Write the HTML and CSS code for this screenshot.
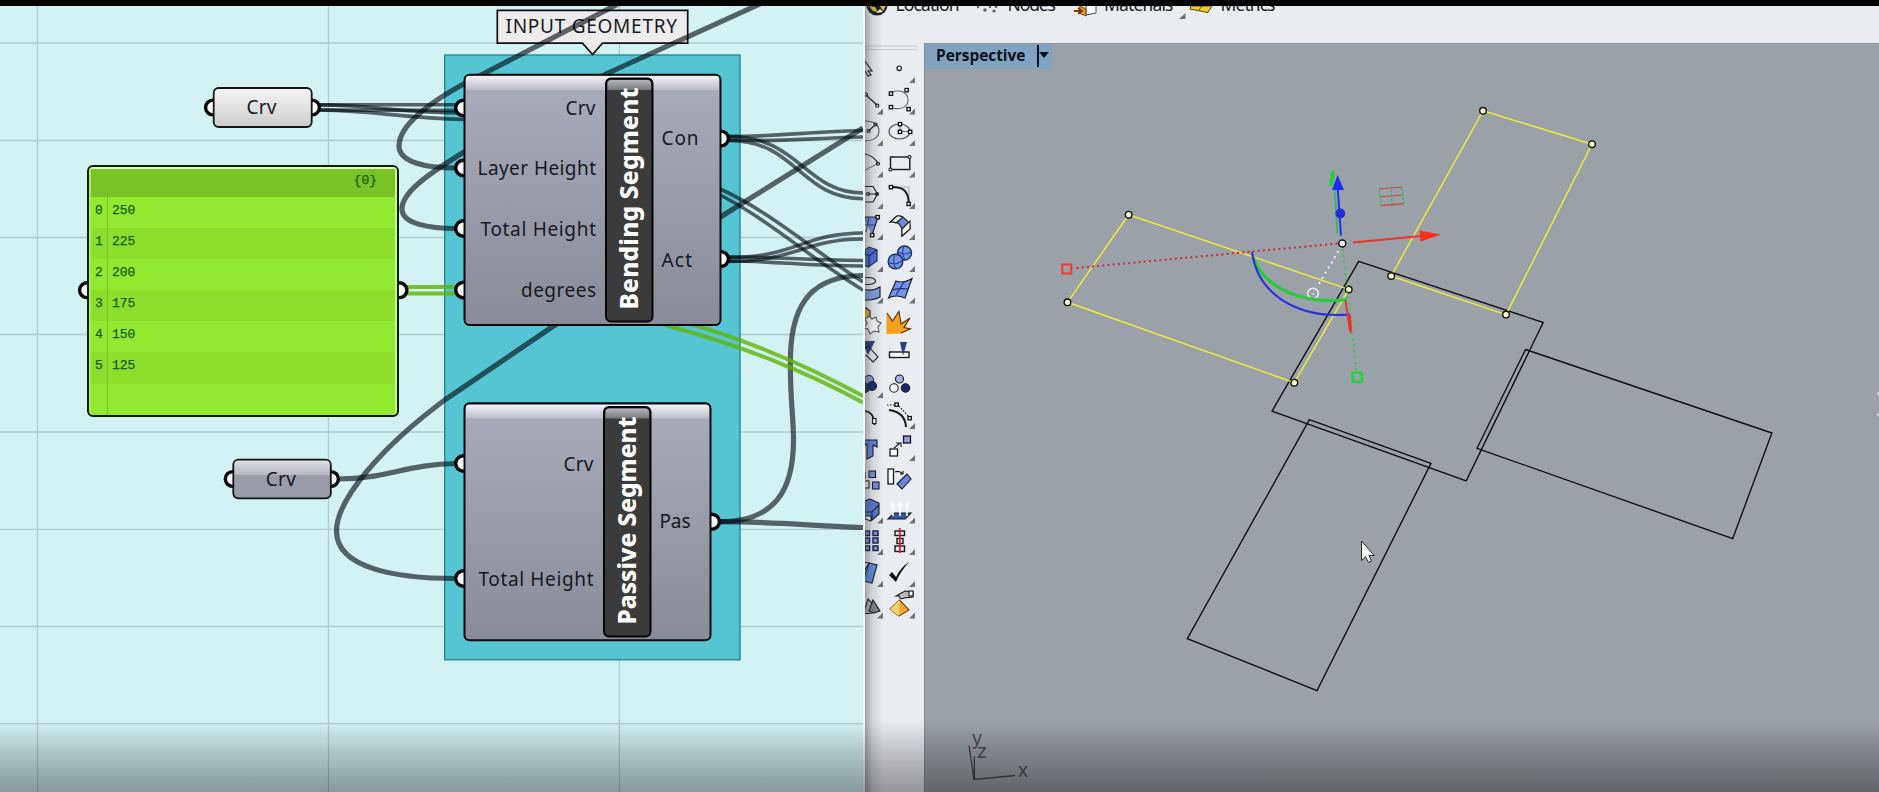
FILE: index.html
```html
<!DOCTYPE html>
<html lang="en">
<head>
<meta charset="utf-8">
<title>Input Geometry</title>
<link rel="stylesheet" href="styles.css">
</head>
<body>
<div class="topline"></div>
<main class="workspace">
  <section class="canvas">
    <svg class="graph" viewBox="0 6 863 786" width="863" height="786">
      <defs>
        <linearGradient id="body" x1="0" y1="0" x2="0" y2="1"><stop offset="0" stop-color="#a9adbb"/><stop offset="1" stop-color="#888c99"/></linearGradient>
        <linearGradient id="gloss" x1="0" y1="0" x2="0" y2="1"><stop offset="0" stop-color="#f2f2f6"/><stop offset="1" stop-color="#b9bcc8"/></linearGradient>
        <linearGradient id="param" x1="0" y1="0" x2="0" y2="1"><stop offset="0" stop-color="#e3e3e7"/><stop offset=".4" stop-color="#b4b6c0"/><stop offset=".41" stop-color="#9a9da8"/><stop offset="1" stop-color="#9a9ca8"/></linearGradient>
        <linearGradient id="light" x1="0" y1="0" x2="0" y2="1"><stop offset="0" stop-color="#f4f4f4"/><stop offset=".4" stop-color="#e6e6e6"/><stop offset="1" stop-color="#cccccc"/></linearGradient>
        <linearGradient id="strip" x1="0" y1="0" x2="0" y2="1"><stop offset="0" stop-color="#b5b6ba"/><stop offset="1" stop-color="#77787b"/></linearGradient>
      </defs>
      <path class="grid" d="M37.5 0V792M328.5 0V792M619.5 0V792M0 43H863M0 140.5H863M0 237.5H863M0 334.5H863M0 432H863M0 529.3H863M0 626.5H863M0 723.7H863"/>
      <rect class="group" x="444.7" y="55" width="295.3" height="604.8"/>
      <path class="balloon" d="M497.3 10.3H687.7V43.2H602.5L592.5 54.5L582.5 43.2H497.3Z"/>
      <text class="label" x="505.5" y="32.7" textLength="171.5">INPUT GEOMETRY</text>

      <g class="wire">
        <path d="M618 4L485 73C440 95 399 122 399 146C399 162 425 168 456 168"/>
        <path d="M760 4L606 74L464 152C425 176 402 193 402 209C402 224 430 228.5 456 228.5"/>
        <path d="M863 128L722 216L555 325L446 399C380 448 336.500 500 336.500 531C336.500 568 395 578.500 456 578.500"/>
        <path d="M339 479C385 479 408 464 456 463.5"/>
        <path d="M720 521.700C775 521.700 793.500 490 793.500 440C793.500 415 789.500 395 790.500 355C792 300 815 276 863 275.500"/>
        <path d="M720 521.700C770 521.700 800 525 863 527.500"/>
      </g>
      <g class="wire thin">
        <path d="M320 104.700H464"/><path d="M320 110C370 110 400 110.500 464 110.500"/><path d="M320 105C380 105.500 400 113 464 113"/><path d="M320 110C380 111 400 118 464 119.500"/>
        <path d="M729 136.500C780 136.500 800 132 863 130.500"/><path d="M729 140C780 142 800 138.500 863 137"/><path d="M729 136.500C800 136.500 805 193 863 193"/><path d="M729 140.500C797 140.500 800 198.700 863 198.700"/>
        <path d="M718 188C770 211 815 252 863 282"/><path d="M718 194C765 217 810 258 863 290"/>
        <path d="M729 257.500C795 257.500 805 233 863 233"/><path d="M729 261.500C795 261.500 805 239 863 239"/><path d="M729 257C780 257 800 260 863 260.500"/><path d="M729 261C780 261 800 266 863 266"/>
      </g>
      <g class="wire green">
        <path d="M407 287H456M407 293.500H456"/>
        <path d="M680 321C742 338 800 362 863 396M665 325C740 345 800 369 863 402.500"/>
      </g>
      <g class="ports">
        <circle cx="213" cy="107.5" r="7.4"/><circle cx="312" cy="107.5" r="7.4"/>
        <circle cx="232.7" cy="479" r="7.4"/><circle cx="331" cy="479" r="7.4"/>
        <circle cx="463.5" cy="108" r="7.8"/><circle cx="463.5" cy="168" r="7.8"/><circle cx="463.5" cy="228.5" r="7.8"/><circle cx="463.5" cy="290" r="7.8"/>
        <circle cx="721" cy="138.5" r="7.4"/><circle cx="721" cy="259" r="7.4"/>
        <circle cx="463.5" cy="463.5" r="7.8"/><circle cx="463.5" cy="578.5" r="7.8"/><circle cx="712" cy="521.7" r="7.4"/>
        <circle cx="87" cy="290.2" r="7.4"/><circle cx="399.5" cy="290.2" r="7.4"/>
      </g>

      <g class="box"><rect x="213.700" y="88" width="98" height="39" rx="5" fill="url(#light)"/><rect x="233.300" y="459.700" width="97.500" height="38.600" rx="5" fill="url(#param)"/></g>
      <text class="label" x="246.500" y="114.300" textLength="30">Crv</text>
      <text class="label" x="265.800" y="485.800" textLength="30">Crv</text>

      <g class="component">
        <rect class="shell" x="464.500" y="74.700" width="256" height="250.300" rx="5" fill="url(#body)"/>
        <path d="M466 90V79Q466 76 469 76H716Q719 76 719 79V90Z" fill="url(#gloss)"/>
        <rect class="strip" x="606" y="78.500" width="46.500" height="243" rx="5"/>
        <path d="M607.500 90V84Q607.500 80 611.500 80H647Q651 80 651 84V90Z" fill="url(#strip)"/>
        <text class="name" transform="translate(637.500 309.500) rotate(-90)" textLength="222">Bending Segment</text>
        <text class="label" x="565.500" y="114.700" textLength="30">Crv</text>
        <text class="label" x="477.500" y="175.300" textLength="118.500">Layer Height</text>
        <text class="label" x="480.500" y="235.500" textLength="115.500">Total Height</text>
        <text class="label" x="521" y="297" textLength="75">degrees</text>
        <text class="label" x="661.500" y="145" textLength="37">Con</text>
        <text class="label" x="661.500" y="266.500" textLength="30.500">Act</text>
      </g>
      <g class="component">
        <rect class="shell" x="464.500" y="403.300" width="246" height="237" rx="5" fill="url(#body)"/>
        <path d="M466 418.500V408Q466 405 469 405H706Q709 405 709 408V418.500Z" fill="url(#gloss)"/>
        <rect class="strip" x="604" y="407" width="46.500" height="229.500" rx="5"/>
        <path d="M605.500 418.500V412.500Q605.500 408.500 609.500 408.500H645Q649 408.500 649 412.500V418.500Z" fill="url(#strip)"/>
        <text class="name" transform="translate(636 624.500) rotate(-90)" textLength="208">Passive Segment</text>
        <text class="label" x="563.500" y="470.800" textLength="30">Crv</text>
        <text class="label" x="478.500" y="585.500" textLength="115">Total Height</text>
        <text class="label" x="659.500" y="528" textLength="31">Pas</text>
      </g>
    </svg>
    <div class="panel">
      <div class="row head"><span class="idx"></span><span class="path">{0}</span></div>
      <div class="row"><span class="idx">0</span><span>250</span></div>
      <div class="row alt"><span class="idx">1</span><span>225</span></div>
      <div class="row"><span class="idx">2</span><span>200</span></div>
      <div class="row alt"><span class="idx">3</span><span>175</span></div>
      <div class="row"><span class="idx">4</span><span>150</span></div>
      <div class="row alt"><span class="idx">5</span><span>125</span></div>
      <div class="row last"><span class="idx"></span></div>
    </div>
  </section>

  <section class="modeler">
    <svg class="tabs" viewBox="865 6 1014 37" width="1014" height="37">
      <circle cx="877" cy="5" r="10.500" fill="#191b1d"/><path d="M869 6L875 7L878 12L873 11ZM880 6H886L883 11Z" fill="#d7b93a"/><path d="M876 13L880 9L883 12Z" fill="#eee"/>
      <text x="895.500" y="10.700" textLength="64">Location</text>
      <g fill="#5f6369"><circle cx="978" cy="7" r="1.200"/><circle cx="985" cy="10" r="1.800"/><circle cx="994" cy="11" r="1.600"/><circle cx="990" cy="7" r="1.200"/><circle cx="996" cy="7" r="1.200"/></g>
      <text x="1007.500" y="10.700" textLength="48.500">Nodes</text>
      <path d="M1086 6V15L1096 13V6" fill="#fff" stroke="#4a4c50"/><path d="M1080 6L1086 9V16L1079 13Z" fill="#e9962e" stroke="#7d4714"/><path d="M1074 11H1081M1078 8L1082 11L1078 14" fill="none" stroke="#7a3c11" stroke-width="1.800"/>
      <text x="1104" y="10.700" textLength="69.500">Materials</text>
      <path d="M1185.500 13V19H1179Z" fill="#6e7276"/>
      <path d="M1191 6H1212L1208 12.500L1190 9Z" fill="#f4cf22" stroke="#514510"/><path d="M1202 6L1199 10" stroke="#514510"/>
      <text x="1220.500" y="10.700" textLength="55">Metrics</text>
    </svg>
    <div class="lower">
      <svg class="tools" viewBox="865 43 59 749" width="59" height="749">
        <path d="M865 46H917M865 49.500H917" stroke="#c3c6cb"/>
        <g fill="#6f7276">
          <path d="M915 77V83H909ZM915 108.500V114.500H909ZM915 140V146H909ZM915 171.500V177.500H909ZM915 203V209H909ZM915 234V240H909ZM915 266V272H909ZM915 297.500V303.500H909ZM915 423V429H909ZM915 455V461H909ZM915 517.500V523.500H909ZM915 549V555H909ZM915 581V587H909ZM915 612.500V618.500H909Z"/>
          <path d="M883 108.500V114.500H877ZM883 140V146H877ZM883 171.500V177.500H877ZM883 203V209H877ZM883 234V240H877ZM883 266V272H877ZM883 297.500V303.500H877ZM883 392V398H877ZM883 517.500V523.500H877ZM883 549V555H877ZM883 581V587H877ZM883 612.500V618.500H877Z"/>
        </g>
        <g fill="none" stroke="#17181a" stroke-width="1.100">
          <path d="M865 61L872 71H868L871 75L868 76L865 71"/>
          <circle cx="899.200" cy="68.300" r="2.300"/>
          <path d="M866 95L877 105"/><circle cx="866" cy="94.500" r="1.500"/><circle cx="877.300" cy="105.700" r="1.600"/>
          <path d="M891 92C902 89 908 93 908 100C908 107 902 110 891 108" stroke="#63666a"/>
          <path d="M865 121C874 121 879 125 879 131C879 138 872 141 865 141" stroke="#55585c"/><path d="M868.500 131L875.500 124.500"/><circle cx="868.500" cy="131" r="1.500"/><circle cx="875.500" cy="124.500" r="1.500"/>
          <ellipse cx="899.500" cy="131.500" rx="10.500" ry="7.500" stroke="#4f5256"/><path d="M900 124V131.500H910" stroke="#777"/>
          <path d="M865 154Q874 156 878 163.500"/><path d="M878 163.500L865 170" stroke="#777"/><circle cx="878" cy="163.700" r="1.500"/>
          <rect x="890.500" y="157" width="19.300" height="12.500" stroke-width="1.400"/><circle cx="909.500" cy="157" r="1.500" fill="#eef1f5"/><circle cx="890.500" cy="169.500" r="1.500" fill="#eef1f5"/>
          <path d="M865 186.500H873L877.500 194L873 202H865M868 194H877"/><circle cx="868" cy="194" r="1.500"/><circle cx="877" cy="194" r="1.500"/>
          <path d="M892 187H909V203" stroke="#aaa"/><path d="M892 187C903 187 908.500 191 908.700 203" stroke-width="1.900"/>
          <path d="M863 217H878L872 235" fill="#7492e0"/><path d="M865 225H875M869 217L866 232" stroke="#263b87"/>
          <path d="M890.500 222L897 216Q906 216 910 226V229L902 236V229Q899 220 890.500 222Z" fill="#6d8ce0"/><path d="M890.500 222L897 216Q900 215.500 903 217L896 223Q894 221.500 890.500 222Z" fill="#f4f7fc"/><path d="M902 229L910 221V229L902 236Z" fill="#fff"/>
          <path d="M862 252L869 247L877 250V261L868 267L862 264Z" fill="#4a6fd4" stroke="#17265f"/><path d="M862 252L869 256L877 250M869 256V267" stroke="#17265f"/>
          <circle cx="904.500" cy="253" r="7" fill="#7193e8" stroke="#1c2c58" stroke-width="1.400"/><path d="M898 252Q904 256 911 252M904 246Q901 253 905 260" stroke="#2b4290"/><circle cx="895.500" cy="261.500" r="7.300" fill="#7193e8" stroke="#1c2c58" stroke-width="1.400"/><path d="M888 262Q895 266 902 261M895 254Q892 262 896 269" stroke="#2b4290"/>
          <ellipse cx="868" cy="281" rx="7.500" ry="3.500"/><path d="M862 289Q872 292 880 287V297Q872 301 862 300Z" fill="#809ce8"/>
          <path d="M896 281Q903 284 912 278.500L905 298Q896 294 888.500 298Z" fill="#7394e8"/><path d="M892 290Q900 288 908 289M904 282L896 295" stroke="#1c2f70"/>
          <path d="M861 311L866 308L870 311V317L865 319Z" fill="#edb51f"/><path d="M869 316L872 319L876 317L877 321L881 323L878 327L879 332L874 331L870 334L868 329L864 328L867 323L865 319Z" fill="#fbfbfb" stroke="#555"/>
          <path d="M886.500 334V313L892.500 321L899 311.500L901 324L910 318L904 327.500L910.500 329L901 333.500Z" fill="#f7a01d" stroke="none"/><path d="M887 313L892.500 321L899 311.500L901 324L910 318L904 327.500L910.500 329L901 333" stroke="#4e2c0a"/>
          <path d="M862 341H875L868 355Z" fill="#263c83" stroke="none"/><path d="M863 350L868 346L878 357L873 362L866 355"/>
          <rect x="889.500" y="352" width="19.500" height="5.500" stroke-width="1.400" fill="#fff"/><path d="M900 342H907L903 356Z" fill="#263c83" stroke="none"/>
          <circle cx="869" cy="380" r="4.500" fill="#96a3e3"/><circle cx="872" cy="386" r="4.500" fill="#17256d"/><circle cx="865" cy="388" r="4.500" fill="#17256d"/>
          <circle cx="899.500" cy="379" r="4" fill="#a8b2ed"/><circle cx="894" cy="388" r="4.200" fill="#fff"/><circle cx="905.500" cy="388" r="4.200" fill="#18286e"/>
          <path d="M864 411Q874 411 874.500 425" stroke-width="1.800"/><rect x="872.500" y="418.500" width="3.500" height="5" fill="#fff"/>
          <path d="M889 410Q905 412 906 427" stroke-width="2"/><path d="M887 405H896M899 406L909 417" stroke-dasharray="1.500 1.500"/>
          <path d="M862 440H877V447L873 445V456L867 459V444L862 447Z" fill="#5f83de"/>
          <path d="M894 448L900 443M896 443H901V447"/><rect x="890" y="449" width="7.500" height="7" fill="#fff" stroke-width="1.300"/><rect x="903.500" y="436" width="7" height="7" fill="#88a0e5" stroke-width="1.300"/>
          <rect x="863" y="481" width="6" height="7" fill="#fff"/><rect x="869" y="471" width="6.500" height="6.500" fill="#7593e6"/><rect x="872.500" y="482" width="6.500" height="7" fill="#7593e6"/><path d="M865 472V479"/>
          <rect x="888" y="469" width="5.500" height="15" fill="#fff" stroke-width="1.300"/><path d="M895 472Q899 470 903 474M900 474H903V471"/><path d="M897 484L907 474L911 479L902 489Z" fill="#6988dd"/>
          <path d="M862 502L870 499L879 503V514L872 520L862 515Z" fill="#5478d4"/><path d="M862 512H872L879 505M872 512V520"/><path d="M865 516H871V521L865 519Z" fill="#fff"/>
          <path d="M888 519L894 513H911L905 519Z" fill="#3154b5"/><path d="M893 516V503M900 516V503M907 516V503M891 506L893 503L895 506M898 506L900 503L902 506M905 506L907 503L909 506" stroke="#fff" stroke-width="1.700"/>
          <g fill="#8c9ad9" stroke="#152250" stroke-width="1.500"><rect x="865" y="531" width="4.500" height="4.500"/><rect x="873" y="531" width="5" height="4.500"/><rect x="865" y="538" width="4.500" height="5"/><rect x="873" y="538" width="5" height="5"/><rect x="865" y="546" width="4.500" height="4.500"/><rect x="873" y="546" width="5" height="4.500"/></g>
          <g stroke-width="1.400"><rect x="895" y="531" width="9.500" height="4.500"/><rect x="897" y="538.500" width="6" height="5"/><rect x="895" y="546" width="9.500" height="5.500"/></g><path d="M899.800 528V553" stroke="#d91e25" stroke-width="1.700"/>
          <path d="M869 563L877 565L872 583L863 581Z" fill="#618be3"/><path d="M861 562L869 563L863 573Z" fill="#fff"/>
          <path d="M889 575L892 572L896 577Q901 567 909 562Q900 572 896 582Q892 578 889 575Z" fill="#0e0e0e" stroke="none"/>
          <path d="M863 614L868 599L878 609L873 613Z" fill="#b3b5b7"/><path d="M873 600L880 611L874 613L869 611Z" fill="#828587"/>
          <path d="M899.500 600L909 610L899 616L890 609Z" fill="#f4a932" stroke="#744a10"/><path d="M899.500 600L899 616L890 609Z" fill="#ffd071" stroke="none"/>
          <path d="M896 596L905 591L913 592V597L904 598Q900 600 899 596Z" fill="#b8babb"/><rect x="909" y="591" width="4" height="5" fill="#fff"/>
        </g>
        <g fill="#fff" stroke="#111" stroke-width="1.300"><rect x="889.300" y="92" width="3.300" height="3.300"/><rect x="889.300" y="105.500" width="3.300" height="3.300"/><rect x="905" y="88.500" width="3.300" height="3.300"/><rect x="907" y="107.500" width="3.300" height="3.300"/><rect x="898.300" y="122.500" width="3.300" height="3.300"/><rect x="898.300" y="130.200" width="3.300" height="3.300"/><rect x="908.500" y="130.200" width="3.300" height="3.300"/><rect x="889.300" y="185.500" width="3.300" height="3.300"/><rect x="907" y="202.200" width="3.300" height="3.300"/><rect x="876" y="215.500" width="3.300" height="3.300"/><rect x="870.500" y="233.500" width="3.300" height="3.300"/><rect x="895" y="403" width="3.300" height="3.300"/><rect x="908" y="416.500" width="3.300" height="3.300"/></g>
      </svg>
      <div class="viewport">
        <div class="vtitle"><span class="vname">Perspective</span><span class="vmenu"></span></div>
        <svg class="scene" viewBox="924 43 955 749" width="955" height="749">
          <g fill="none" stroke="#0b0d10" stroke-width="1.350">
            <path d="M1358.700 261.300L1543.200 322.500L1466.200 480.800L1272 411.200Z"/>
            <path d="M1525.500 349.500L1771.900 433L1732.700 538.600L1477 448.300Z"/>
            <path d="M1309.400 419.700L1431 463.400L1317 690.600L1187.300 638.700Z"/>
          </g>
          <g fill="none" stroke="#f0ea3c" stroke-width="1.500">
            <path d="M1128.700 214.700L1348.700 289.300L1294.300 382.700L1067.500 302.300Z"/>
            <path d="M1483 110.800L1592 144.200L1506 314.600L1391.200 276Z"/>
          </g>
          <g fill="#fffed4" stroke="#121309" stroke-width="1.400"><circle cx="1128.700" cy="214.700" r="3.300"/><circle cx="1348.700" cy="289.500" r="3.300"/><circle cx="1294.300" cy="382.700" r="3.300"/><circle cx="1067.500" cy="302.300" r="3.300"/><circle cx="1483" cy="110.800" r="3.300"/><circle cx="1592" cy="144.200" r="3.300"/><circle cx="1506" cy="314.600" r="3.300"/><circle cx="1391.200" cy="276" r="3.300"/></g>
          <g fill="none" stroke-width="2">
            <path d="M1076.500 268L1338 243.500" stroke="#d0282e" stroke-dasharray="2 3.200"/>
            <rect x="1062.300" y="264.500" width="9" height="9" stroke="#ee3b2e"/>
            <path d="M1341.500 246L1317 287" stroke="#eef0f2" stroke-dasharray="2 4"/>
            <circle cx="1313" cy="293.500" r="5.300" stroke="#f1f3f5" stroke-width="1.400"/><path d="M1312.500 294H1314" stroke="#f1f3f5" stroke-width="1.400"/>
            <path d="M1342.500 249L1356.500 370" stroke="#2cc846" stroke-dasharray="2 4"/>
            <rect x="1352.500" y="372.500" width="9.500" height="9.500" rx="1.500" stroke="#20d338" stroke-width="2.600"/>
            <path d="M1253 257C1264 288 1302 305 1347 299.500" stroke="#20ce37" stroke-width="3"/>
            <path d="M1252 252C1257 291 1293 319 1350 314.500" stroke="#2830de"/>
            <path d="M1353 242.600L1421 236" stroke="#ee3427"/>
            <path d="M1337.500 234L1334.700 190" stroke="#32b66a" stroke-width="1.800"/>
            <path d="M1341 235.500L1337.700 188" stroke="#242ee6"/>
            <path d="M1345.300 300L1350 330" stroke="#ef3022" stroke-width="1.700"/>
          </g>
          <path d="M1331.500 170L1335 172L1333 185.500L1329 186Z" fill="#20d13a"/>
          <path d="M1332 190L1337.500 175L1344 190Z" fill="#202cf4"/><circle cx="1340.300" cy="213.500" r="4.900" fill="#222bd8"/>
          <path d="M1347 315H1351L1352 331L1350 334Z" fill="#ef3022"/>
          <path d="M1419.500 230.500L1441 234.600L1420.500 241.500Z" fill="#fb2d1c"/>
          <circle cx="1342.300" cy="243.500" r="3.500" fill="#fff" stroke="#111" stroke-width="1.500"/>
          <path d="M1379 189L1402 187M1380 197L1403 195M1381 205.700L1404 203.700" stroke="#c9443c" stroke-width="1.200"/><path d="M1379 190L1381 205M1391 189L1392 204M1402 188L1404 203" stroke="#38bb4d" stroke-width="1.500" stroke-dasharray="3 1.500"/>
          <path d="M1361.500 541V560.500L1365.500 556.800L1368.500 562.500L1371.500 561L1369 555.500H1374.200Z" fill="#fff" stroke="#252729"/>
          <g class="axes"><path d="M969 745.500L974 779.500L1015 775.500M974.400 756V779.500"/><text x="972" y="745">y</text><text x="977" y="757.500">z</text><text x="1018" y="777">x</text></g>
          <circle cx="1879" cy="393.700" r="1.600" fill="#e4e6e8"/><circle cx="1879" cy="414.700" r="1.600" fill="#e4e6e8"/>
        </svg>
      </div>
    </div>
  </section>
</main>
<div class="shade"></div>
</body>
</html>
```
FILE: styles.css
```css
* { box-sizing: border-box; }
html, body { margin: 0; width: 1879px; height: 792px; overflow: hidden; background: #000; }
body { position: relative; font-family: "Noto Sans", "Open Sans", sans-serif; }
svg { display: block; }
.topline { height: 6px; background: #000; }
.workspace { display: flex; height: 786px; }
.canvas { position: relative; width: 863px; height: 786px; background: #d2f2f3; overflow: hidden; flex: none; }
.grid { fill: none; stroke: #afcbce; stroke-width: 1.3; }
.group { fill: #55c5d3; stroke: #2b8792; stroke-width: 1.4; }
.balloon { fill: #ececec; stroke: #111; stroke-width: 1.7; }
.label { font-size: 19px; fill: #17191f; }
.name { font-size: 24.5px; font-weight: 800; fill: #fff; }
.ports circle { fill: #fff; stroke: #050505; stroke-width: 3.4; }
.wire { fill: none; stroke: #00060d; stroke-opacity: .61; stroke-width: 5.2; }
.wire path { fill: none; }
.thin { stroke-width: 3.6; }
.green { stroke: #5eb400; stroke-opacity: .8; stroke-width: 4; }
.box rect { stroke: #151515; stroke-width: 1.8; }
.shell { stroke: #0b0b0c; stroke-width: 2; }
.strip { fill: #3b3b3b; stroke: #050505; stroke-width: 2; }
.panel {
  position: absolute; left: 87px; top: 159px; width: 312px; height: 252px;
  border: 2px solid #121d09; border-radius: 6px; background: #91ea2f;
  box-shadow: inset 0 2px 0 #dfffbb, inset 2px 0 0 #a8f052, inset -2px 0 0 #c5f69b;
  padding: 2px 2px 0; overflow: hidden;
  font: 13px/28px "Liberation Mono", monospace; color: #145c06;
  -webkit-text-stroke: .25px #145c06;
}
.row { display: flex; height: 31.1px; }
.row.head { height: 28px; background: #79c326; line-height: 24px; }
.row.alt { background: #8bdf2c; }
.row.last { height: 32px; }
.idx { width: 17px; margin-right: 4px; padding-left: 4px; border-right: 1px solid #75c329; }
.path { margin-left: auto; margin-right: 18px; }

.modeler { flex: 1; width: 1016px; border-left: 2px solid #f6f9fb; background: #e9ecf1; display: flex; flex-direction: column; position: relative; }
.modeler::before {
  content: ""; position: absolute; left: 0; top: 0; width: 18px; height: 786px; pointer-events: none;
  background: linear-gradient(90deg, rgba(50,55,60,.4), rgba(70,75,80,.15) 40%, rgba(90,95,100,0));
}
.tabs { font-size: 17.5px; fill: #191a1c; flex: none; }
.lower { display: flex; height: 749px; }
.tools { flex: none; }
.viewport { position: relative; width: 955px; height: 749px; background: #9aa1a8; border-top: 1px solid #8c9298; border-left: 1px solid #868c93; }
.vtitle { position: absolute; left: 0; top: 0; z-index: 1; width: 127px; height: 25px; background: #82a2c2; padding: 0 0 2px 11px; display: flex; align-items: center; }
.vname { width: 101px; font-family: "Open Sans", sans-serif; font-size: 15.4px; font-weight: 700; line-height: 21px; color: #07101b; letter-spacing: 0; }
.vmenu { width: 14px; height: 22px; border-left: 2px solid #07101b; position: relative; }
.vmenu::after { content: ""; position: absolute; left: 0; top: 7px; border: 5px solid transparent; border-top: 6px solid #07101b; border-bottom: 0; }
.scene { margin: -1px 0 0 -1px; }
.axes path { fill: none; stroke: #42474b; stroke-width: 1.4; }
.axes text { font: 20px "Liberation Sans", Arial, sans-serif; fill: #4a4f54; }
.shade { position: absolute; left: 0; right: 0; bottom: 0; height: 72px; background: linear-gradient(rgba(0,0,0,0), rgba(0,0,0,.18) 45%, rgba(0,0,0,.37)); pointer-events: none; }
```
